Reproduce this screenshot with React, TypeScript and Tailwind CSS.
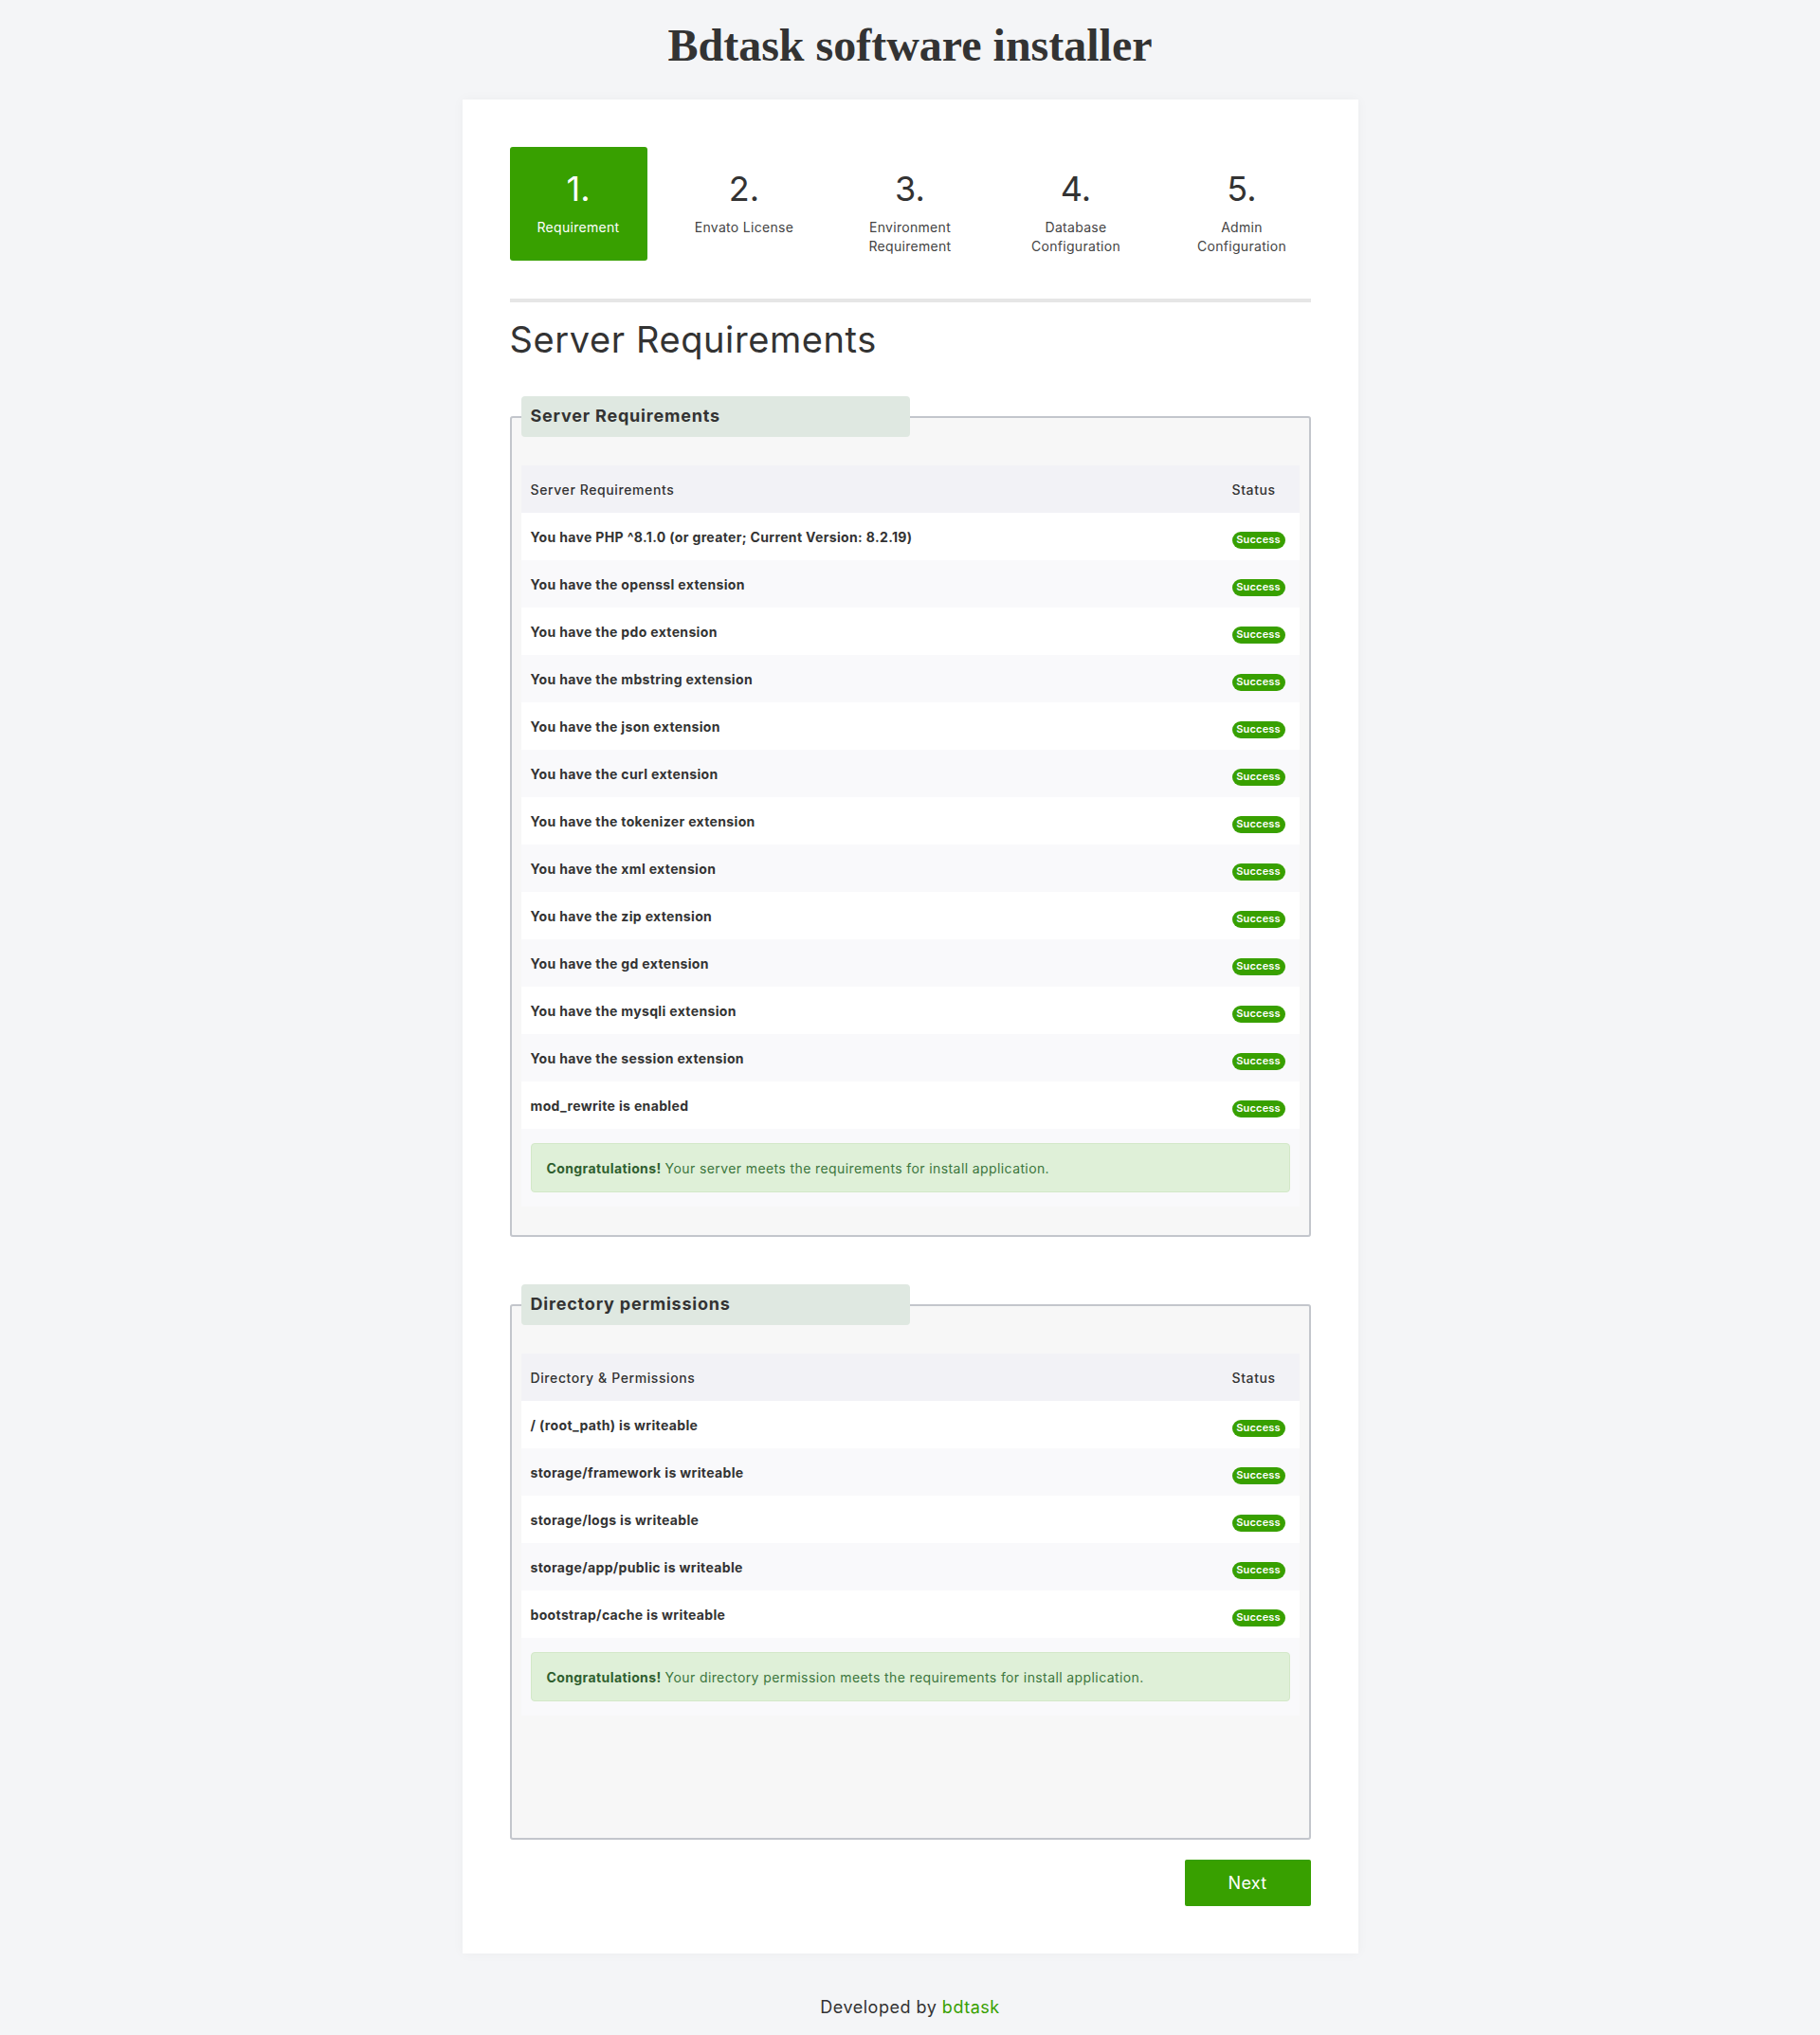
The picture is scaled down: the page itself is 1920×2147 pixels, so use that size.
import React from 'react';

const steps = [
  { n: '1.', label: ['Requirement'], active: true },
  { n: '2.', label: ['Envato License'] },
  { n: '3.', label: ['Environment', 'Requirement'] },
  { n: '4.', label: ['Database', 'Configuration'] },
  { n: '5.', label: ['Admin', 'Configuration'] },
];

const serverRows = [
  'You have PHP ^8.1.0 (or greater; Current Version: 8.2.19)',
  'You have the openssl extension',
  'You have the pdo extension',
  'You have the mbstring extension',
  'You have the json extension',
  'You have the curl extension',
  'You have the tokenizer extension',
  'You have the xml extension',
  'You have the zip extension',
  'You have the gd extension',
  'You have the mysqli extension',
  'You have the session extension',
  'mod_rewrite is enabled',
];

const dirRows = [
  '/ (root_path) is writeable',
  'storage/framework is writeable',
  'storage/logs is writeable',
  'storage/app/public is writeable',
  'bootstrap/cache is writeable',
];

const Badge = () => (
  <span className="inline-flex h-[18px] w-[56px] items-center justify-center rounded-full bg-[#38a000] text-[11px] font-semibold leading-none tracking-[0.2px] text-white">
    Success
  </span>
);

type PanelProps = {
  title: string;
  head: string;
  rows: string[];
  message: string;
  className?: string;
};

const Panel: React.FC<PanelProps> = ({ title, head, rows, message, className }) => (
  <fieldset
    className={`rounded-[3px] border-2 border-[#c3c6cc] bg-[#f7f7f7] px-[10px] pt-[30px] ${className ?? ''}`}
  >
    <legend className="h-[43px] w-[410px] rounded-[4px] bg-[#dfe8e1] pl-[10px] text-[18px] font-bold leading-[42px] tracking-[0.8px] text-[#333]">
      {title}
    </legend>

    <div>
      {/* header */}
      <div className="flex h-[50px] items-center bg-[#f2f2f6] text-[14px] font-medium tracking-[0.6px] text-[#333]">
        <div className="flex-1 pl-[10px]">{head}</div>
        <div className="w-[71px] shrink-0">Status</div>
      </div>

      {rows.map((r, i) => (
        <div
          key={r}
          className={`flex h-[50px] items-center text-[14px] font-bold tracking-[0.35px] text-[#333] ${
            i % 2 === 0 ? 'bg-white' : 'bg-[#f9f9fb]'
          }`}
        >
          <div className="flex-1 pl-[10px]">{r}</div>
          <div className="w-[71px] shrink-0 pt-[4px]">
            <Badge />
          </div>
        </div>
      ))}

      {/* message row */}
      <div className="bg-[#f9f9fb] px-[10px] py-[15px]">
        <div className="flex h-[52px] items-center rounded-[4px] border border-[#d3e8c8] bg-[#dff0d8] px-[16px] text-[14px] tracking-[0.4px] text-[#3c763d]">
          <span className="mr-[4px] font-bold text-[#2f5f2f]">Congratulations!</span>
          {message}
        </div>
      </div>
    </div>
  </fieldset>
);

export default function App() {
  return (
    <div className="min-h-screen bg-[#f4f5f7] font-['Inter',sans-serif] text-[#333]">
      <h1 className="pt-[24px] text-center font-['Liberation_Serif',serif] text-[48px] font-bold leading-[48px] text-[#333]">
        Bdtask software installer
      </h1>

      <div className="mx-auto mt-[33px] w-[945px] bg-white p-[50px] shadow-[0_0_12px_rgba(0,0,0,0.04)]">
        {/* steps */}
        <div className="grid grid-cols-5 gap-[30px]">
          {steps.map((s) => (
            <div
              key={s.n}
              className={`flex h-[120px] flex-col items-center rounded-[3px] pt-[22px] text-center ${
                s.active ? 'bg-[#38a000] text-white' : 'text-[#333]'
              }`}
            >
              <div className="text-[36px] leading-[44px]">{s.n}</div>
              <div
                className={`mt-[9px] text-[14px] leading-[20px] tracking-[0.3px] ${
                  s.active ? 'text-white' : 'text-[#444]'
                }`}
              >
                {s.label.map((l) => (
                  <div key={l}>{l}</div>
                ))}
              </div>
            </div>
          ))}
        </div>

        <div className="mt-[40px] h-[4px] bg-[#e6e6e6]" />

        <h2 className="mb-[38px] mt-[17px] text-[38px] leading-[44px] tracking-[0.6px] text-[#333]">
          Server Requirements
        </h2>

        <Panel
          title="Server Requirements"
          head="Server Requirements"
          rows={serverRows}
          message="Your server meets the requirements for install application."
          className="pb-[30px]"
        />

        <Panel
          title="Directory permissions"
          head="Directory & Permissions"
          rows={dirRows}
          message="Your directory permission meets the requirements for install application."
          className="mt-[50px] pb-[129px]"
        />

        <div className="mt-[21px] flex justify-end">
          <button className="h-[49px] w-[133px] rounded-[2px] bg-[#38a000] text-[18px] tracking-[0.3px] text-white">
            Next
          </button>
        </div>
      </div>

      <footer className="pb-[16px] pt-[45px] text-center text-[18px] leading-[24px] tracking-[0.5px] text-[#333]">
        Developed by <span className="text-[#38a000]">bdtask</span>
      </footer>
    </div>
  );
}
